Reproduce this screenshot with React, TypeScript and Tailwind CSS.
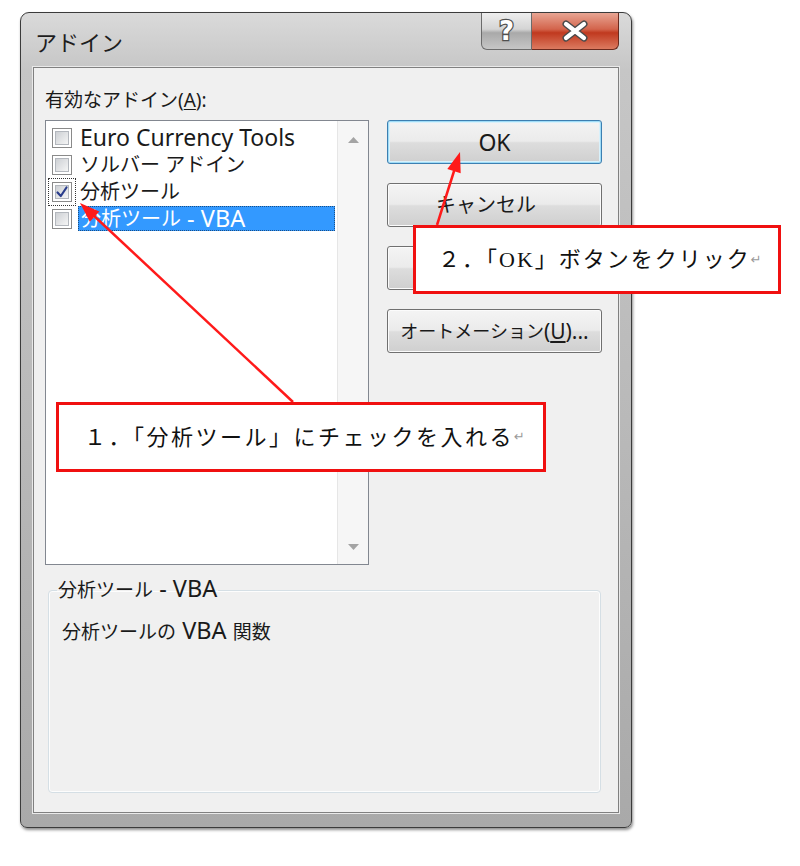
import React from 'react';

const ui = "font-['Noto_Sans','Noto_Sans_CJK_JP',sans-serif]";
const memo = "font-['Liberation_Serif','Noto_Sans_CJK_JP',serif]";

// Latin runs are drawn larger than the kana, as in the original dialog font
function L({ children }: { children: React.ReactNode }) {
    return <span className="text-[23.5px] leading-none">{children}</span>;
}

function CheckBox({ checked }: { checked?: boolean }) {
    return (
        <div className="relative w-[20px] h-[20px] border border-[#8a8a8a] bg-white">
            <div className="absolute inset-[2px] border border-[#b3b7bd] bg-[linear-gradient(135deg,#cdd0d4,#f5f5f5)]" />
            {checked && (
                <svg className="absolute inset-0" width="18" height="18" viewBox="0 0 18 18">
                    <path d="M4.5 9.5 L7.8 13 L13.5 4.5" fill="none" stroke="#2a3d8c" strokeWidth="2.2" strokeLinecap="round" strokeLinejoin="round" />
                </svg>
            )}
        </div>
    );
}

function Row({ children, checked, focus, selected }: { children: React.ReactNode; checked?: boolean; focus?: boolean; selected?: boolean }) {
    return (
        <div className="flex items-center h-[27px]">
            <div className={`p-[3px] border ${focus ? 'border-dotted border-[#333333]' : 'border-transparent'}`}>
                <CheckBox checked={checked} />
            </div>
            <span
                className={`ml-[2px] px-[2px] h-[25px] flex items-center whitespace-nowrap text-[20px] leading-none ${
                    selected ? 'flex-1 mr-[2px] bg-[#3399ff] text-white border border-dotted border-[#1b4f86]' : 'text-[#1a1a1a]'
                }`}
            >
                {children}
            </span>
        </div>
    );
}

function Button({ children, primary, className = '' }: { children?: React.ReactNode; primary?: boolean; className?: string }) {
    return (
        <div
            className={`h-[44px] rounded-[3px] border flex items-center justify-center whitespace-nowrap leading-none text-[#1a1a1a] bg-[linear-gradient(to_bottom,#f4f4f4_0%,#ebebeb_48%,#dddddd_52%,#cfcfcf_100%)] ${
                primary
                    ? 'border-[#3c7fb1] shadow-[inset_0_0_0_1px_#9fdcf7,inset_0_0_0_2px_#d9f1fb]'
                    : 'border-[#707070] shadow-[inset_0_0_0_1px_#fbfbfb]'
            } ${className}`}
        >
            {children}
        </div>
    );
}

function Arrow({ dir }: { dir: 'up' | 'down' }) {
    return (
        <svg width="11" height="6" viewBox="0 0 11 6">
            <path d={dir === 'up' ? 'M0 6 L5.5 0 L11 6 Z' : 'M0 0 L11 0 L5.5 6 Z'} fill="#a4a4a4" />
        </svg>
    );
}

export default function App() {
    return (
        <div className={`relative w-[800px] h-[866px] bg-white overflow-hidden pt-[12px] pl-[20px] ${ui}`}>
            {/* dialog window */}
            <div className="w-[612px] h-[816px] rounded-t-[9px] rounded-b-[7px] border border-[#3b3b3b] bg-[linear-gradient(to_bottom,#dadada_0%,#c6c6c6_7%,#b9b9b9_50%,#a9a9a9_100%)] shadow-[1px_2px_3px_rgba(0,0,0,0.45)] px-[12px] pb-[14px] flex flex-col">
                <div className="h-[54px] flex justify-between items-start">
                    <div className="pl-[2px] pt-[14px] text-[22px] leading-[30px] text-[#1e1e1e]">アドイン</div>
                    <div className="flex">
                        <div className="w-[51px] h-[37px] rounded-bl-[6px] border border-t-0 border-[#6b6b6b] bg-[linear-gradient(to_bottom,#eeeeee_0%,#d4d4d4_45%,#a9a9a9_55%,#c6c6c6_100%)] flex items-center justify-center">
                            <span className="font-['DejaVu_Sans',sans-serif] text-[26px] font-bold text-white leading-none [-webkit-text-stroke:2.5px_#505050] [paint-order:stroke_fill]">?</span>
                        </div>
                        <div className="w-[87px] h-[37px] rounded-br-[6px] border border-l-0 border-t-0 border-[#6b2a1e] bg-[linear-gradient(to_bottom,#e8a593_0%,#d3644c_45%,#c0391f_55%,#dc7a60_100%)] flex items-center justify-center">
                            <svg width="30" height="22" viewBox="0 0 30 22">
                                <path d="M6 4 L24 18 M24 4 L6 18" stroke="#4a4a4a" strokeWidth="7" strokeLinecap="round" />
                                <path d="M6 4 L24 18 M24 4 L6 18" stroke="#ffffff" strokeWidth="4.2" strokeLinecap="round" />
                            </svg>
                        </div>
                    </div>
                </div>

                <div className="flex-1 bg-[#f0f0f0] border border-[#808080] shadow-[0_0_0_1px_#e9e9e9] pt-[19px] pl-[11px] flex flex-col">
                    <div className="h-[26px] leading-[26px] text-[19px] text-[#1a1a1a]">
                        有効なアドイン(<span className="underline underline-offset-2">A</span>):
                    </div>

                    <div className="mt-[7px] flex">
                        <div className="w-[324px] h-[445px] border border-[#828790] bg-white flex">
                            <div className="flex-1 pt-[3px] pl-[2px] flex flex-col">
                                <Row>
                                    <span className="text-[23px]">Euro Currency Tools</span>
                                </Row>
                                <Row>ソルバー アドイン</Row>
                                <Row checked focus>
                                    分析ツール
                                </Row>
                                <Row selected>
                                    分析ツール<L>&nbsp;- VBA</L>
                                </Row>
                            </div>
                            <div className="w-[31px] bg-[#f6f6f6] border-l border-[#e6e6e6] flex flex-col justify-between items-center pt-[16px] pb-[14px]">
                                <Arrow dir="up" />
                                <Arrow dir="down" />
                            </div>
                        </div>

                        <div className="ml-[18px] w-[215px] flex flex-col gap-[19px]">
                            <Button primary>
                                <span className="text-[23px]">OK</span>
                            </Button>
                            <Button className="pr-[17px] text-[20px]">キャンセル</Button>
                            <Button />
                            <Button className="text-[18px]">
                                オートメーション<span className="text-[21px]">(<span className="underline underline-offset-2">U</span>)...</span>
                            </Button>
                        </div>
                    </div>

                    <fieldset className="mt-[12px] ml-[3px] w-[553px] h-[216px] border border-[#d5dfe5] rounded-[4px] shadow-[inset_0_0_0_1px_#fdfdfd] pl-[13px]">
                        <legend className="ml-[-5px] px-[1px] text-[19px] leading-[26px] text-[#1a1a1a]">
                            分析ツール<L>&nbsp;- VBA</L>
                        </legend>
                        <div className="pt-[16px] text-[19px] leading-[26px] text-[#1a1a1a]">
                            分析ツールの<L>&nbsp;VBA&nbsp;</L>関数
                        </div>
                    </fieldset>
                </div>
            </div>

            {/* annotation arrows */}
            <svg className="absolute inset-0 pointer-events-none" width="800" height="866" viewBox="0 0 800 866">
                <line x1="293" y1="402" x2="92" y2="214" stroke="#ff1a1a" strokeWidth="2.5" />
                <polygon points="80,203 99.4,211.6 89.8,221.8" fill="#ff1a1a" />
                <line x1="437" y1="225" x2="455" y2="168" stroke="#ff1a1a" strokeWidth="2.5" />
                <polygon points="460,152 460.7,173.2 447.3,169" fill="#ff1a1a" />
            </svg>

            {/* callouts */}
            <div className={`absolute left-[56px] top-[402px] w-[490px] h-[70px] border-[3px] border-[#f01010] bg-white flex items-center pl-[25px] whitespace-nowrap text-[22px] tracking-[2.5px] text-[#111] ${memo}`}>
                １．「分析ツール」にチェックを入れる
                <span className="font-['DejaVu_Sans',sans-serif] text-[13px] text-[#9a9a9a] tracking-normal">↵</span>
            </div>
            <div className={`absolute left-[413px] top-[225px] w-[368px] h-[69px] border-[3px] border-[#f01010] bg-white flex items-center pl-[22px] whitespace-nowrap text-[22px] tracking-[2px] text-[#111] ${memo}`}>
                ２．「OK」ボタンをクリック
                <span className="font-['DejaVu_Sans',sans-serif] text-[13px] text-[#9a9a9a] tracking-normal">↵</span>
            </div>
        </div>
    );
}
